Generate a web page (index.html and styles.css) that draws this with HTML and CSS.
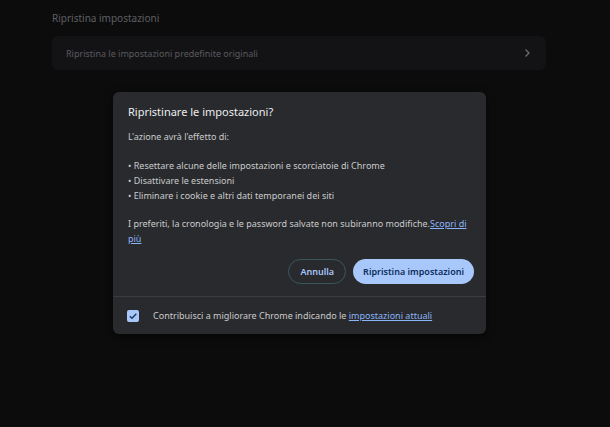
FILE: index.html
```html
<!DOCTYPE html>
<html lang="it">
<head>
    <meta charset="UTF-8">
    <meta name="viewport" content="width=device-width, initial-scale=1.0">
    <title>Ripristina impostazioni</title>
    <link rel="stylesheet" href="styles.css">
</head>
<body>

    <div class="page">
        <h2 class="section-title">Ripristina impostazioni</h2>
        <div class="settings-row">
            <span>Ripristina le impostazioni predefinite originali</span>
            <svg class="chevron" width="10" height="10" viewBox="0 0 10 10">
                <path d="M3.5 1.5 L7 5 L3.5 8.5" fill="none" stroke="#6d6d70" stroke-width="1.3"/>
            </svg>
        </div>

        <div class="dialog">
            <div class="dialog-body">
                <h1>Ripristinare le impostazioni?</h1>
                <p>L'azione avrà l'effetto di:</p>
                <ul class="effects">
                    <li>Resettare alcune delle impostazioni e scorciatoie di Chrome</li>
                    <li>Disattivare le estensioni</li>
                    <li>Eliminare i cookie e altri dati temporanei dei siti</li>
                </ul>
                <p class="note">I preferiti, la cronologia e le password salvate non subiranno modifiche.<a href="#">Scopri di più</a></p>
                <div class="buttons">
                    <button class="btn btn-outline">Annulla</button>
                    <button class="btn btn-primary">Ripristina impostazioni</button>
                </div>
            </div>
            <div class="dialog-footer">
                <span class="checkbox">
                    <svg width="12" height="12" viewBox="0 0 12 12">
                        <path d="M2.8 6.2 L5 8.3 L9.3 3.8" fill="none" stroke="#1f3760" stroke-width="1.4"/>
                    </svg>
                </span>
                <span>Contribuisci a migliorare Chrome indicando le <a href="#">impostazioni attuali</a></span>
            </div>
        </div>
    </div>

</body>
</html>
```

FILE: styles.css
```css
body {
    margin: 0;
    background-color: #0c0c0d;
    font-family: "Noto Sans", "Open Sans", sans-serif;
    font-size: 9px;
    color: #c9cacc;
}
.page {
    width: 610px;
    height: 427px;
    padding: 10px 0 0 52px;
    box-sizing: border-box;
}
.section-title {
    margin: 0;
    font-size: 10px;
    font-weight: normal;
    line-height: 16px;
    color: #5f5f62;
}
.settings-row {
    margin-top: 10px;
    width: 494px;
    height: 34px;
    box-sizing: border-box;
    padding: 0 14px;
    background: #131316;
    border-radius: 6px;
    display: flex;
    align-items: center;
    justify-content: space-between;
    color: #5a5a5d;
}
.dialog {
    margin: 22px 0 0 61px;
    width: 373px;
    background: #292a2d;
    border-radius: 6px;
    box-shadow: 0 2px 8px rgba(0, 0, 0, 0.6);
}
.dialog-body {
    padding: 11px 12px 12px 15px;
}
.dialog h1 {
    margin: 0 0 8px;
    font-size: 11px;
    font-weight: normal;
    line-height: 18px;
    color: #eceef0;
}
.dialog p {
    margin: 0;
    line-height: 15px;
}
.effects {
    margin: 14px 0 13px;
    padding: 0;
    list-style: none;
    line-height: 15px;
}
.effects li::before {
    content: "• ";
}
.note a, .dialog-footer a {
    color: #8ab4f8;
}
.buttons {
    margin-top: 13px;
    display: flex;
    justify-content: flex-end;
    gap: 7px;
}
.btn {
    font-family: inherit;
    font-size: 9px;
    font-weight: 600;
    height: 25px;
    border-radius: 13px;
    padding: 0 10px;
    cursor: pointer;
}
.btn-outline {
    padding: 0 11px;
    background: transparent;
    border: 1px solid #3b5660;
    color: #a8c7fa;
}
.btn-primary {
    background: #a8c7fa;
    border: none;
    color: #0b2d5c;
}
.dialog-footer {
    border-top: 1px solid #3b3c3f;
    padding: 0 14px;
    height: 37px;
    display: flex;
    align-items: center;
    gap: 14px;
}
.checkbox {
    width: 12px;
    height: 12px;
    border-radius: 2px;
    background: #a8c7fa;
    display: flex;
}
```
